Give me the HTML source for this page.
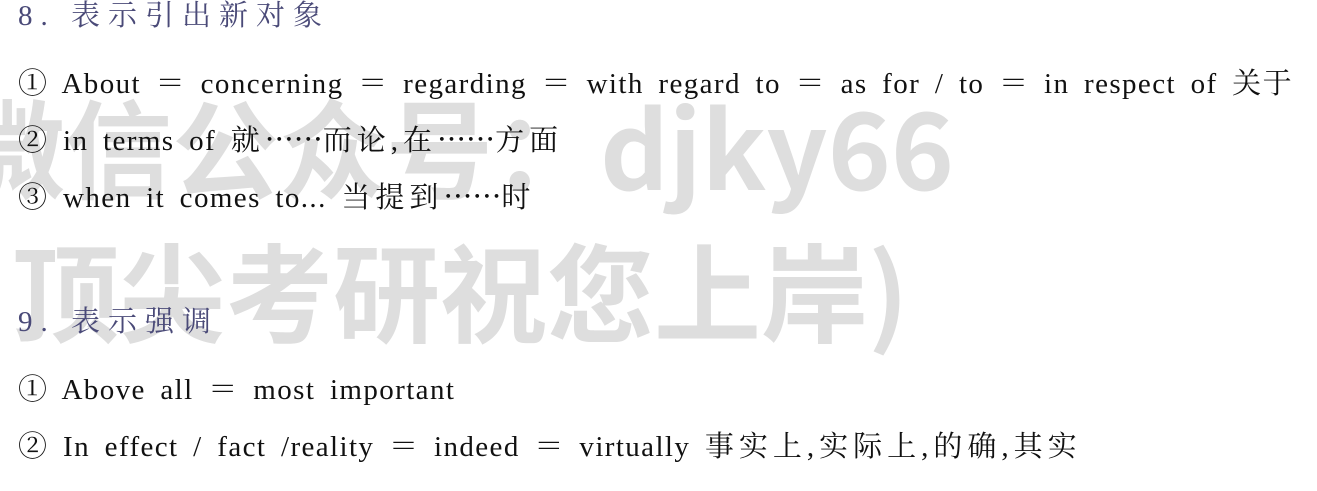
<!DOCTYPE html>
<html><head><meta charset="utf-8"><style>
body{margin:0;width:1317px;height:491px;background:#fff;overflow:hidden;position:relative;font-family:"Liberation Serif","Noto Serif CJK SC",serif;}
.wm{position:absolute;color:#dedede;font-family:"Noto Sans CJK SC","WenQuanYi Zen Hei",sans-serif;font-weight:bold;font-size:107px;white-space:nowrap;line-height:1;z-index:0}
.t{position:absolute;left:18px;white-space:nowrap;font-size:29px;letter-spacing:1.4px;word-spacing:6px;color:#111;z-index:1;line-height:1}
.h{color:#4a4a78;font-size:29px;letter-spacing:8px;word-spacing:0}
.c{letter-spacing:5px}
.d{font-family:"Noto Sans CJK SC",sans-serif;letter-spacing:0}
</style></head><body>
<div class="wm" style="left:-42px;top:90px">微信公众号：djky66</div>
<div class="wm" style="left:12px;top:234px">顶尖考研祝您上岸)</div>
<div class="t h" style="top:2px">8. 表示引出新对象</div>
<div class="t" style="top:70px">① About ＝ concerning ＝ regarding ＝ with regard to ＝ as for / to ＝ in respect of 关于</div>
<div class="t" style="top:124px">② in terms of <span class="c">就<span class="d">⋯⋯</span>而论,在<span class="d">⋯⋯</span>方面</span></div>
<div class="t" style="top:181px">③ when it comes to... <span class="c">当提到<span class="d">⋯⋯</span>时</span></div>
<div class="t h" style="top:308px">9. 表示强调</div>
<div class="t" style="top:376px">① Above all ＝ most important</div>
<div class="t" style="top:433px">② In effect / fact /reality ＝ indeed ＝ virtually <span class="c">事实上,实际上,的确,其实</span></div>
</body></html>
